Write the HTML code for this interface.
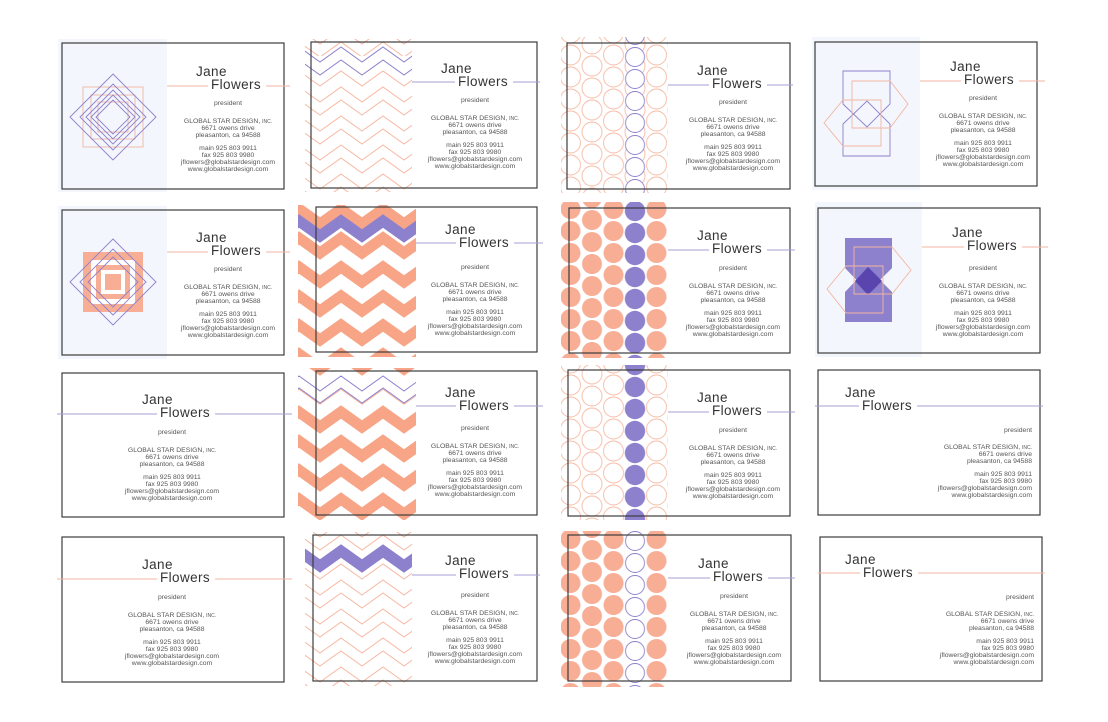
<!DOCTYPE html>
<html><head><meta charset="utf-8"><style>
html,body{margin:0;padding:0;background:#fff;}
svg{display:block;}
.n{font-family:"Liberation Sans",sans-serif;font-size:13.5px;fill:#333;letter-spacing:0.4px;}
.i{font-family:"Liberation Sans",sans-serif;font-size:6.8px;fill:#555;}
.s{font-size:5px;}
</style></head><body>
<svg width="1108" height="722" viewBox="0 0 1108 722" xmlns="http://www.w3.org/2000/svg">
<defs>
 <clipPath id="k1"><rect x="305" y="39" width="107" height="153"/></clipPath>
 <clipPath id="k2"><rect x="298" y="205" width="118" height="152"/></clipPath>
 <clipPath id="k3"><rect x="298" y="368" width="118" height="152"/></clipPath>
 <clipPath id="k4"><rect x="305" y="532" width="107" height="154"/></clipPath>
 <pattern id="chf" patternUnits="userSpaceOnUse" width="42" height="29" x="299" y="0">
  <polyline points="-21,21 0,6 21,21 42,6 63,21" fill="none" stroke="#f8a587" stroke-width="11" stroke-linejoin="miter"/>
  <polyline points="-21,50 0,35 21,50 42,35 63,50" fill="none" stroke="#f8a587" stroke-width="11"/>
  <polyline points="-21,-8 0,-23 21,-8 42,-23 63,-8" fill="none" stroke="#f8a587" stroke-width="11"/>
 </pattern>
 <pattern id="cho" patternUnits="userSpaceOnUse" width="42" height="29" x="299" y="0">
  <polyline points="-21,15 0,0 21,15 42,0 63,15" fill="none" stroke="#f6b9a2" stroke-width="1"/>
  <polyline points="-21,28 0,13 21,28 42,13 63,28" fill="none" stroke="#f6b9a2" stroke-width="1"/>
  <polyline points="-21,44 0,29 21,44 42,29 63,44" fill="none" stroke="#f6b9a2" stroke-width="1"/>
 </pattern>
 <pattern id="cf" patternUnits="userSpaceOnUse" width="43" height="22" x="559.75" y="0">
  <circle cx="10.75" cy="11" r="10" fill="#f8ad95"/>
  <circle cx="32.25" cy="0" r="10" fill="#f8ad95"/>
  <circle cx="32.25" cy="22" r="10" fill="#f8ad95"/>
 </pattern>
 <pattern id="co" patternUnits="userSpaceOnUse" width="43" height="22" x="559.75" y="0">
  <circle cx="10.75" cy="11" r="10" fill="none" stroke="#f6b9a2" stroke-width="0.9"/>
  <circle cx="32.25" cy="0" r="10" fill="none" stroke="#f6b9a2" stroke-width="0.9"/>
  <circle cx="32.25" cy="22" r="10" fill="none" stroke="#f6b9a2" stroke-width="0.9"/>
 </pattern>
 <pattern id="pf" patternUnits="userSpaceOnUse" width="21.5" height="22" x="624.25" y="2">
  <circle cx="10.75" cy="11" r="10.2" fill="#8d80cc"/>
 </pattern>
 <pattern id="po" patternUnits="userSpaceOnUse" width="21.5" height="22" x="624.25" y="2">
  <circle cx="10.75" cy="11" r="9.5" fill="#fff" stroke="#8d80cc" stroke-width="0.9"/>
 </pattern>
</defs>

<rect x="58" y="39" width="109" height="153" fill="#f3f6fc"/>
<rect x="58" y="206" width="109" height="153" fill="#f3f6fc"/>
<rect x="812" y="37" width="108" height="153" fill="#f3f6fc"/>
<rect x="815" y="202" width="107" height="155" fill="#f3f6fc"/>

<g fill="none" stroke="#f3b6a2" stroke-width="0.9">
 <rect x="83" y="87" width="60" height="60"/><rect x="91" y="95" width="44" height="44"/><rect x="98" y="102" width="30" height="30"/>
</g>
<g fill="none" stroke="#8d80cc" stroke-width="0.9">
 <path d="M113,74 L156,117 L113,160 L70,117 Z"/><path d="M113,84 L146,117 L113,150 L80,117 Z"/>
 <path d="M113,90 L140,117 L113,144 L86,117 Z"/><path d="M113,95 L135,117 L113,139 L91,117 Z"/><path d="M113,100 L130,117 L113,134 L96,117 Z"/>
</g>
<rect x="83" y="252" width="60" height="60" fill="#f8ad95"/>
<rect x="91" y="260" width="44" height="44" fill="#fff"/>
<rect x="96" y="265" width="34" height="34" fill="#f8ad95"/>
<rect x="101" y="270" width="24" height="24" fill="#fff"/>
<rect x="105" y="274" width="16" height="16" fill="#f8ad95"/>
<g fill="none" stroke="#8d80cc" stroke-width="0.9">
 <path d="M113,239 L156,282 L113,325 L70,282 Z"/><path d="M113,249 L146,282 L113,315 L80,282 Z"/><path d="M113,257 L138,282 L113,307 L88,282 Z"/>
</g>

<g fill="none" stroke-width="0.9">
 <path d="M843,71 H890 V104 L867,127 L843,104 Z" stroke="#8d80cc"/>
 <path d="M843,156 H890 V124 L867,101 L843,124 Z" stroke="#8d80cc"/>
 <path d="M852,81 H890 L908,104 L890,128 H852 Z" stroke="#f3b6a2"/>
 <path d="M843,100 H881 V146 H843 L824,123 Z" stroke="#f3b6a2"/>
</g>
<path d="M845,238 H892 V268 L868,292 L845,268 Z" fill="#8d80cc"/>
<path d="M845,322 H892 V292 L868,268 L845,292 Z" fill="#8d80cc"/>
<path d="M868,267 L882,281 L868,295 L855,281 Z" fill="#5a44ae"/>
<g fill="none" stroke="#f3b6a2" stroke-width="0.9">
 <path d="M854,247 H892 L911,270 L892,294 H854 Z"/>
 <path d="M846,266 H883 V313 H846 L827,289 Z"/>
</g>

<rect x="305" y="39" width="107" height="153" fill="url(#cho)"/>
<g clip-path="url(#k1)">
 <polyline points="278,55 299,70 320,55 341,70 362,55 383,70 404,55 425,70" fill="#fff" stroke="none" transform="translate(0,0)"/>
 <polyline points="278,68 299,53 320,68 341,53 362,68 383,53 404,68 425,53" fill="none" stroke="#fff" stroke-width="12"/>
 <polyline points="278,62 299,47 320,62 341,47 362,62 383,47 404,62 425,47" fill="none" stroke="#8d80cc" stroke-width="1"/>
 <polyline points="278,75 299,60 320,75 341,60 362,75 383,60 404,75 425,60" fill="none" stroke="#8d80cc" stroke-width="1"/>
</g>
<rect x="298" y="205" width="118" height="152" fill="url(#chf)"/>
<g clip-path="url(#k2)">
 <polyline points="278,236 299,221 320,236 341,221 362,236 383,221 404,236 425,221" fill="none" stroke="#8d80cc" stroke-width="11"/>
</g>
<rect x="298" y="368" width="118" height="152" fill="url(#chf)"/>
<g clip-path="url(#k3)">
 <polyline points="278,397 299,382 320,397 341,382 362,397 383,382 404,397 425,382" fill="none" stroke="#fff" stroke-width="11"/>
 <polyline points="278,391 299,376 320,391 341,376 362,391 383,376 404,391 425,376" fill="none" stroke="#8d80cc" stroke-width="1"/>
 <polyline points="278,403 299,388 320,403 341,388 362,403 383,388 404,403 425,388" fill="none" stroke="#8d80cc" stroke-width="1"/>
</g>
<rect x="305" y="532" width="107" height="154" fill="url(#cho)"/>
<g clip-path="url(#k4)">
 <polyline points="278,566 299,551 320,566 341,551 362,566 383,551 404,566 425,551" fill="none" stroke="#fff" stroke-width="14"/>
 <polyline points="278,566 299,551 320,566 341,551 362,566 383,551 404,566 425,551" fill="none" stroke="#8d80cc" stroke-width="11"/>
</g>

<rect x="561" y="37" width="107" height="156" fill="url(#co)"/>
<rect x="624.25" y="37" width="21.5" height="156" fill="url(#po)"/>
<rect x="561" y="202" width="107" height="156" fill="url(#cf)"/>
<rect x="624.25" y="202" width="21.5" height="156" fill="#fff"/>
<rect x="624.25" y="202" width="21.5" height="156" fill="url(#pf)"/>
<rect x="561" y="365" width="107" height="155" fill="url(#co)"/>
<rect x="624.25" y="365" width="21.5" height="155" fill="#fff"/>
<rect x="624.25" y="365" width="21.5" height="155" fill="url(#pf)"/>
<rect x="561" y="531" width="107" height="156" fill="url(#cf)"/>
<rect x="624.25" y="531" width="21.5" height="156" fill="#fff"/>
<rect x="624.25" y="531" width="21.5" height="156" fill="url(#po)"/>

<g fill="none" stroke="#3c3c3c" stroke-width="1.2">
 <rect x="62" y="43" width="222" height="146"/><rect x="311" y="42" width="226" height="146"/><rect x="567" y="43" width="223" height="146"/><rect x="815" y="42" width="222" height="144"/>
 <rect x="62" y="210" width="222" height="145"/><rect x="316" y="207" width="221" height="145"/><rect x="569" y="208" width="221" height="145"/><rect x="818" y="208" width="222" height="145"/>
 <rect x="62" y="373" width="222" height="144"/><rect x="316" y="371" width="221" height="144"/><rect x="568" y="370" width="222" height="146"/><rect x="818" y="370" width="222" height="145"/>
 <rect x="62" y="537" width="222" height="145"/><rect x="313" y="535" width="224" height="146"/><rect x="568" y="535" width="223" height="146"/><rect x="820" y="537" width="222" height="144"/>
</g>

<g stroke-width="1">
 <line x1="167" y1="86" x2="290" y2="86" stroke="#f3b6a2"/>
 <line x1="412" y1="82" x2="540" y2="82" stroke="#a79fd6"/>
 <line x1="668" y1="85" x2="793" y2="85" stroke="#a79fd6"/>
 <line x1="920" y1="81" x2="1045" y2="81" stroke="#f3b6a2"/>
 <line x1="167" y1="252" x2="290" y2="252" stroke="#f3b6a2"/>
 <line x1="416" y1="243" x2="543" y2="243" stroke="#a79fd6"/>
 <line x1="668" y1="250" x2="795" y2="250" stroke="#a79fd6"/>
 <line x1="922" y1="247" x2="1048" y2="247" stroke="#f3b6a2"/>
 <line x1="57" y1="414" x2="292" y2="414" stroke="#a79fd6"/>
 <line x1="416" y1="406" x2="543" y2="406" stroke="#a79fd6"/>
 <line x1="668" y1="412" x2="795" y2="412" stroke="#a79fd6"/>
 <line x1="815" y1="406" x2="1043" y2="406" stroke="#a79fd6"/>
 <line x1="57" y1="579" x2="292" y2="579" stroke="#f3b6a2"/>
 <line x1="412" y1="575" x2="540" y2="575" stroke="#a79fd6"/>
 <line x1="668" y1="578" x2="795" y2="578" stroke="#a79fd6"/>
 <line x1="818" y1="573" x2="1045" y2="573" stroke="#f3b6a2"/>
</g>

<g transform="translate(284,43)">
 <text class="n" x="-88" y="33">Jane</text><rect x="-76" y="35" width="58" height="12" fill="#fff"/><text class="n" x="-73" y="46">Flowers</text>
 <g class="i" text-anchor="middle"><text x="-56" y="62">president</text><text x="-56" y="80">GLOBAL STAR DESIGN, <tspan class="s">INC.</tspan></text><text x="-56" y="87">6671 owens drive</text><text x="-56" y="94">pleasanton, ca 94588</text><text x="-56" y="107">main 925 803 9911</text><text x="-56" y="114">fax 925 803 9980</text><text x="-56" y="121">jflowers@globalstardesign.com</text><text x="-56" y="128">www.globalstardesign.com</text></g>
</g>
<g transform="translate(537,40)">
 <text class="n" x="-96" y="33">Jane</text><rect x="-82" y="35" width="58" height="12" fill="#fff"/><text class="n" x="-79" y="46">Flowers</text>
 <g class="i" text-anchor="middle"><text x="-62" y="62">president</text><text x="-62" y="80">GLOBAL STAR DESIGN, <tspan class="s">INC.</tspan></text><text x="-62" y="87">6671 owens drive</text><text x="-62" y="94">pleasanton, ca 94588</text><text x="-62" y="107">main 925 803 9911</text><text x="-62" y="114">fax 925 803 9980</text><text x="-62" y="121">jflowers@globalstardesign.com</text><text x="-62" y="128">www.globalstardesign.com</text></g>
</g>
<g transform="translate(790,42)">
 <text class="n" x="-93" y="33">Jane</text><rect x="-81" y="35" width="58" height="12" fill="#fff"/><text class="n" x="-78" y="46">Flowers</text>
 <g class="i" text-anchor="middle"><text x="-57" y="62">president</text><text x="-57" y="80">GLOBAL STAR DESIGN, <tspan class="s">INC.</tspan></text><text x="-57" y="87">6671 owens drive</text><text x="-57" y="94">pleasanton, ca 94588</text><text x="-57" y="107">main 925 803 9911</text><text x="-57" y="114">fax 925 803 9980</text><text x="-57" y="121">jflowers@globalstardesign.com</text><text x="-57" y="128">www.globalstardesign.com</text></g>
</g>
<g transform="translate(1037,38)">
 <text class="n" x="-87" y="33">Jane</text><rect x="-76" y="35" width="58" height="12" fill="#fff"/><text class="n" x="-73" y="46">Flowers</text>
 <g class="i" text-anchor="middle"><text x="-54" y="62">president</text><text x="-54" y="80">GLOBAL STAR DESIGN, <tspan class="s">INC.</tspan></text><text x="-54" y="87">6671 owens drive</text><text x="-54" y="94">pleasanton, ca 94588</text><text x="-54" y="107">main 925 803 9911</text><text x="-54" y="114">fax 925 803 9980</text><text x="-54" y="121">jflowers@globalstardesign.com</text><text x="-54" y="128">www.globalstardesign.com</text></g>
</g>
<g transform="translate(284,209)">
 <text class="n" x="-88" y="33">Jane</text><rect x="-76" y="35" width="58" height="12" fill="#fff"/><text class="n" x="-73" y="46">Flowers</text>
 <g class="i" text-anchor="middle"><text x="-56" y="62">president</text><text x="-56" y="80">GLOBAL STAR DESIGN, <tspan class="s">INC.</tspan></text><text x="-56" y="87">6671 owens drive</text><text x="-56" y="94">pleasanton, ca 94588</text><text x="-56" y="107">main 925 803 9911</text><text x="-56" y="114">fax 925 803 9980</text><text x="-56" y="121">jflowers@globalstardesign.com</text><text x="-56" y="128">www.globalstardesign.com</text></g>
</g>
<g transform="translate(537,201)">
 <text class="n" x="-92" y="33">Jane</text><rect x="-81" y="35" width="58" height="12" fill="#fff"/><text class="n" x="-78" y="46">Flowers</text>
 <g class="i" text-anchor="middle"><text x="-62" y="68">president</text><text x="-62" y="86">GLOBAL STAR DESIGN, <tspan class="s">INC.</tspan></text><text x="-62" y="93">6671 owens drive</text><text x="-62" y="100">pleasanton, ca 94588</text><text x="-62" y="113">main 925 803 9911</text><text x="-62" y="120">fax 925 803 9980</text><text x="-62" y="127">jflowers@globalstardesign.com</text><text x="-62" y="134">www.globalstardesign.com</text></g>
</g>
<g transform="translate(790,207)">
 <text class="n" x="-93" y="33">Jane</text><rect x="-81" y="35" width="58" height="12" fill="#fff"/><text class="n" x="-78" y="46">Flowers</text>
 <g class="i" text-anchor="middle"><text x="-57" y="63">president</text><text x="-57" y="81">GLOBAL STAR DESIGN, <tspan class="s">INC.</tspan></text><text x="-57" y="88">6671 owens drive</text><text x="-57" y="95">pleasanton, ca 94588</text><text x="-57" y="108">main 925 803 9911</text><text x="-57" y="115">fax 925 803 9980</text><text x="-57" y="122">jflowers@globalstardesign.com</text><text x="-57" y="129">www.globalstardesign.com</text></g>
</g>
<g transform="translate(1040,204)">
 <text class="n" x="-88" y="33">Jane</text><rect x="-76" y="35" width="58" height="12" fill="#fff"/><text class="n" x="-73" y="46">Flowers</text>
 <g class="i" text-anchor="middle"><text x="-57" y="66">president</text><text x="-57" y="84">GLOBAL STAR DESIGN, <tspan class="s">INC.</tspan></text><text x="-57" y="91">6671 owens drive</text><text x="-57" y="98">pleasanton, ca 94588</text><text x="-57" y="111">main 925 803 9911</text><text x="-57" y="118">fax 925 803 9980</text><text x="-57" y="125">jflowers@globalstardesign.com</text><text x="-57" y="132">www.globalstardesign.com</text></g>
</g>
<g transform="translate(537,364)">
 <text class="n" x="-92" y="33">Jane</text><rect x="-81" y="35" width="58" height="12" fill="#fff"/><text class="n" x="-78" y="46">Flowers</text>
 <g class="i" text-anchor="middle"><text x="-62" y="66">president</text><text x="-62" y="84">GLOBAL STAR DESIGN, <tspan class="s">INC.</tspan></text><text x="-62" y="91">6671 owens drive</text><text x="-62" y="98">pleasanton, ca 94588</text><text x="-62" y="111">main 925 803 9911</text><text x="-62" y="118">fax 925 803 9980</text><text x="-62" y="125">jflowers@globalstardesign.com</text><text x="-62" y="132">www.globalstardesign.com</text></g>
</g>
<g transform="translate(790,369)">
 <text class="n" x="-93" y="33">Jane</text><rect x="-81" y="35" width="58" height="12" fill="#fff"/><text class="n" x="-78" y="46">Flowers</text>
 <g class="i" text-anchor="middle"><text x="-57" y="63">president</text><text x="-57" y="81">GLOBAL STAR DESIGN, <tspan class="s">INC.</tspan></text><text x="-57" y="88">6671 owens drive</text><text x="-57" y="95">pleasanton, ca 94588</text><text x="-57" y="108">main 925 803 9911</text><text x="-57" y="115">fax 925 803 9980</text><text x="-57" y="122">jflowers@globalstardesign.com</text><text x="-57" y="129">www.globalstardesign.com</text></g>
</g>
<g transform="translate(537,532)">
 <text class="n" x="-92" y="33">Jane</text><rect x="-81" y="35" width="58" height="12" fill="#fff"/><text class="n" x="-78" y="46">Flowers</text>
 <g class="i" text-anchor="middle"><text x="-62" y="65">president</text><text x="-62" y="83">GLOBAL STAR DESIGN, <tspan class="s">INC.</tspan></text><text x="-62" y="90">6671 owens drive</text><text x="-62" y="97">pleasanton, ca 94588</text><text x="-62" y="110">main 925 803 9911</text><text x="-62" y="117">fax 925 803 9980</text><text x="-62" y="124">jflowers@globalstardesign.com</text><text x="-62" y="131">www.globalstardesign.com</text></g>
</g>
<g transform="translate(791,535)">
 <text class="n" x="-93" y="33">Jane</text><rect x="-81" y="35" width="58" height="12" fill="#fff"/><text class="n" x="-78" y="46">Flowers</text>
 <g class="i" text-anchor="middle"><text x="-57" y="63">president</text><text x="-57" y="81">GLOBAL STAR DESIGN, <tspan class="s">INC.</tspan></text><text x="-57" y="88">6671 owens drive</text><text x="-57" y="95">pleasanton, ca 94588</text><text x="-57" y="108">main 925 803 9911</text><text x="-57" y="115">fax 925 803 9980</text><text x="-57" y="122">jflowers@globalstardesign.com</text><text x="-57" y="129">www.globalstardesign.com</text></g>
</g>

<g transform="translate(62,373)">
 <text class="n" x="80" y="31">Jane</text><rect x="95" y="33" width="58" height="12" fill="#fff"/><text class="n" x="98" y="44">Flowers</text>
 <g class="i" text-anchor="middle"><text x="110" y="61">president</text><text x="110" y="79">GLOBAL STAR DESIGN, <tspan class="s">INC.</tspan></text><text x="110" y="86">6671 owens drive</text><text x="110" y="93">pleasanton, ca 94588</text><text x="110" y="106">main 925 803 9911</text><text x="110" y="113">fax 925 803 9980</text><text x="110" y="120">jflowers@globalstardesign.com</text><text x="110" y="127">www.globalstardesign.com</text></g>
</g>
<g transform="translate(62,538)">
 <text class="n" x="80" y="31">Jane</text><rect x="95" y="33" width="58" height="12" fill="#fff"/><text class="n" x="98" y="44">Flowers</text>
 <g class="i" text-anchor="middle"><text x="110" y="61">president</text><text x="110" y="79">GLOBAL STAR DESIGN, <tspan class="s">INC.</tspan></text><text x="110" y="86">6671 owens drive</text><text x="110" y="93">pleasanton, ca 94588</text><text x="110" y="106">main 925 803 9911</text><text x="110" y="113">fax 925 803 9980</text><text x="110" y="120">jflowers@globalstardesign.com</text><text x="110" y="127">www.globalstardesign.com</text></g>
</g>

<g transform="translate(818,370)">
 <text class="n" x="27" y="27">Jane</text><rect x="41" y="29" width="58" height="12" fill="#fff"/><text class="n" x="44" y="40">Flowers</text>
 <g class="i" text-anchor="end"><text x="214" y="62">president</text><text x="214" y="79">GLOBAL STAR DESIGN, <tspan class="s">INC.</tspan></text><text x="214" y="86">6671 owens drive</text><text x="214" y="93">pleasanton, ca 94588</text><text x="214" y="106">main 925 803 9911</text><text x="214" y="113">fax 925 803 9980</text><text x="214" y="120">jflowers@globalstardesign.com</text><text x="214" y="127">www.globalstardesign.com</text></g>
</g>
<g transform="translate(820,537)">
 <text class="n" x="25" y="27">Jane</text><rect x="40" y="29" width="58" height="12" fill="#fff"/><text class="n" x="43" y="40">Flowers</text>
 <g class="i" text-anchor="end"><text x="214" y="62">president</text><text x="214" y="79">GLOBAL STAR DESIGN, <tspan class="s">INC.</tspan></text><text x="214" y="86">6671 owens drive</text><text x="214" y="93">pleasanton, ca 94588</text><text x="214" y="106">main 925 803 9911</text><text x="214" y="113">fax 925 803 9980</text><text x="214" y="120">jflowers@globalstardesign.com</text><text x="214" y="127">www.globalstardesign.com</text></g>
</g>
</svg>
</body></html>
